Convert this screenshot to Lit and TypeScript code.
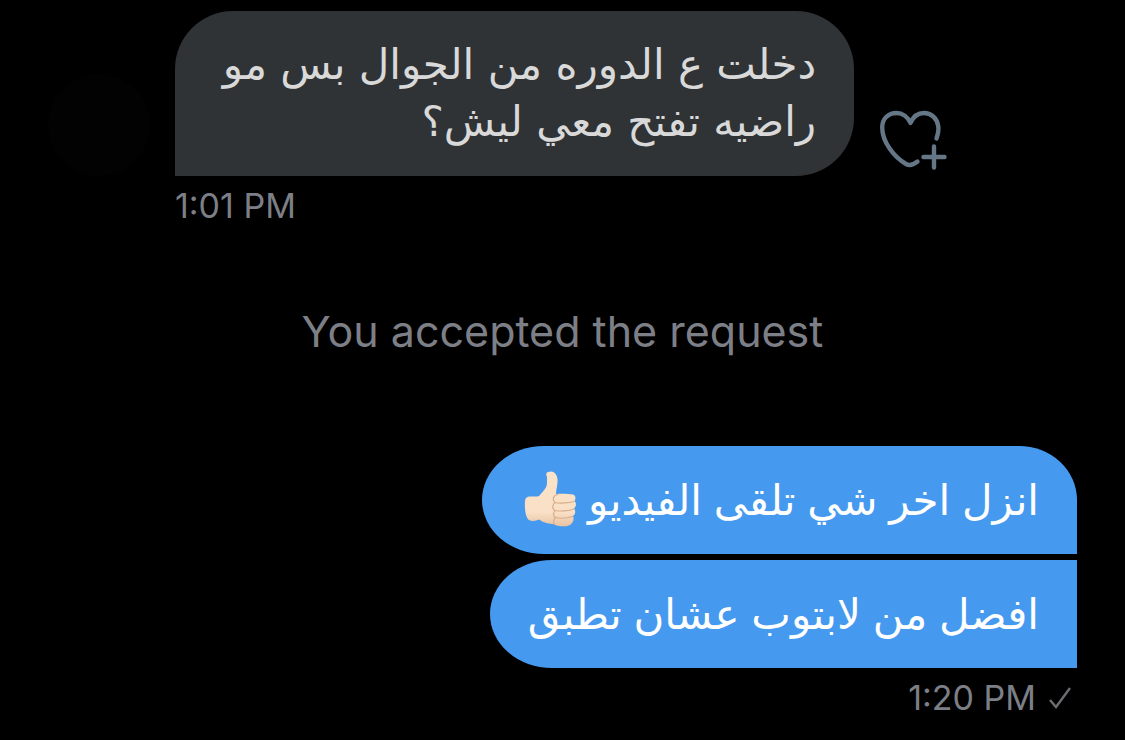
import { LitElement, html, css, svg } from "lit";
import { customElement } from "lit/decorators.js";

const thumbsUp = html`
  <svg class="emoji" viewBox="0 0 52 56" role="img" aria-label="👍🏻">
    <defs>
      <linearGradient id="skin" x1="0" y1="0" x2="0" y2="1">
        <stop offset="0" stop-color="#fbe3c8" />
        <stop offset="0.75" stop-color="#f8dfc5" />
        <stop offset="1" stop-color="#e9c3a2" />
      </linearGradient>
    </defs>
    <path fill="url(#skin)" d="M1 30C1 27 3 25.500 6 25.500H12C14 25.500 15 25 16 24C19 20 23 17 23 12V6C21 2 23 0.500 27 0.500C31 1 33 4 33.500 8C34 13 32 18 32 23C35 22.500 45 22.500 49 23.500C52 24.500 52 28 50.500 30C52.500 31.500 52.500 35.500 50 37.500C52 39.500 51.500 43.500 49 45C50.500 48 49 53 45 54.500C41 56 33 55.500 29 53C25 53 20 52 15 48.500C12 50 8 50.500 5 49C1 46 0.500 35 1 30Z" />
    <g fill="none" stroke="#d9ad8b" stroke-width="1.200" stroke-linecap="round">
      <path d="M34 23.500C29 24 28 29 31 31.500C28 34 28 38 31 39.500C29 42 29 45 31.500 46.500C29 49 29 52 31 53.500" />
      <path d="M31 31.500C35 32.500 45 32 50 30.500M31 39.500C36 40.500 45 40 50 38M31.500 46.500C36 47.500 44 47 48.500 45.500" />
    </g>
  </svg>`;

const heartPlus = html`
  <svg class="heart" viewBox="0 0 68 60" aria-hidden="true">
    <g fill="none" stroke="#657786" stroke-width="4.400" stroke-linecap="round" stroke-linejoin="round">
      ${svg`<path d="M56.500 28.500C58 24 59 20 58.200 16C57 8 51 3 44 3C38 3 33 7 30.500 13C28 7 22.500 3 16.500 3C8 3 2.200 9 2.200 17.500C2.200 32 14 47 26 54C29.500 56 33 55 37.500 51.500" />
      <path d="M54 36.500V57.500M43.500 47H64.500" />`}
    </g>
  </svg>`;

@customElement("app-root")
export class AppRoot extends LitElement {
  static styles = css`
    :host {
      display: block;
      min-height: 100vh;
      box-sizing: border-box;
      padding: 11px 48px 0;
      background: #000;
      color: #7d7f87;
      font-family: Inter, "Liberation Sans", sans-serif;
    }
    .incoming {
      display: flex;
      align-items: flex-end;
    }
    .avatar {
      flex: none;
      width: 102px;
      height: 102px;
      margin-right: 25px;
      border-radius: 50%;
      background: #020202;
    }
    .bubble {
      box-sizing: border-box;
      margin: 0;
      padding: 25px 38px 26px;
      font-family: "DejaVu Sans", sans-serif;
      font-size: 42px;
      line-height: 57px;
    }
    .received {
      width: 66%;
      border-radius: 58px 58px 58px 0;
      background: #2f3336;
      color: #d9d9d9;
    }
    .react {
      flex: none;
      margin: 0 0 6px 26px;
      padding: 0;
      border: 0;
      background: none;
    }
    .heart {
      display: block;
      width: 68px;
      height: 60px;
    }
    .time {
      display: flex;
      align-items: center;
      font-size: 34px;
      line-height: 40px;
    }
    .time-in {
      margin: 10px 0 0 127px;
    }
    .notice {
      margin: 75px 0 85px;
      text-align: center;
      font-size: 43px;
      line-height: 60px;
    }
    .outgoing {
      display: flex;
      flex-direction: column;
      align-items: flex-end;
      gap: 6px;
    }
    .sent {
      background: #4599ef;
      color: #fff;
      font-family: Inter, "DejaVu Sans", sans-serif;
      border-radius: 62px 0 0 62px / 54px 0 0 54px;
    }
    .first {
      border-top-right-radius: 58px 54px;
    }
    .emoji {
      width: 52px;
      height: 56px;
      margin: -12px 0 -12px 4px;
    }
    .time-out {
      justify-content: flex-end;
      gap: 12px;
      margin: 10px 5px 0 0;
    }
    .check {
      width: 24px;
      height: 24px;
    }
  `;

  render() {
    return html`
      <section class="incoming">
        <div class="avatar"></div>
        <p class="bubble received" dir="rtl" lang="ar">دخلت ع الدوره من الجوال بس مو<br />راضيه تفتح معي ليش؟</p>
        <button class="react" aria-label="Add reaction">${heartPlus}</button>
      </section>
      <time class="time time-in">1:01 PM</time>
      <p class="notice">You accepted the request</p>
      <section class="outgoing">
        <p class="bubble sent first" dir="rtl" lang="ar">انزل اخر شي تلقى الفيديو ${thumbsUp}</p>
        <p class="bubble sent" dir="rtl" lang="ar">افضل من لابتوب عشان تطبق</p>
      </section>
      <div class="time time-out">
        <time>1:20 PM</time>
        <svg class="check" viewBox="0 0 24 24" role="img" aria-label="Sent">
          <path d="M2 14L8 21L22 2" fill="none" stroke="#6b6d73" stroke-width="2.400" />
        </svg>
      </div>
    `;
  }
}
